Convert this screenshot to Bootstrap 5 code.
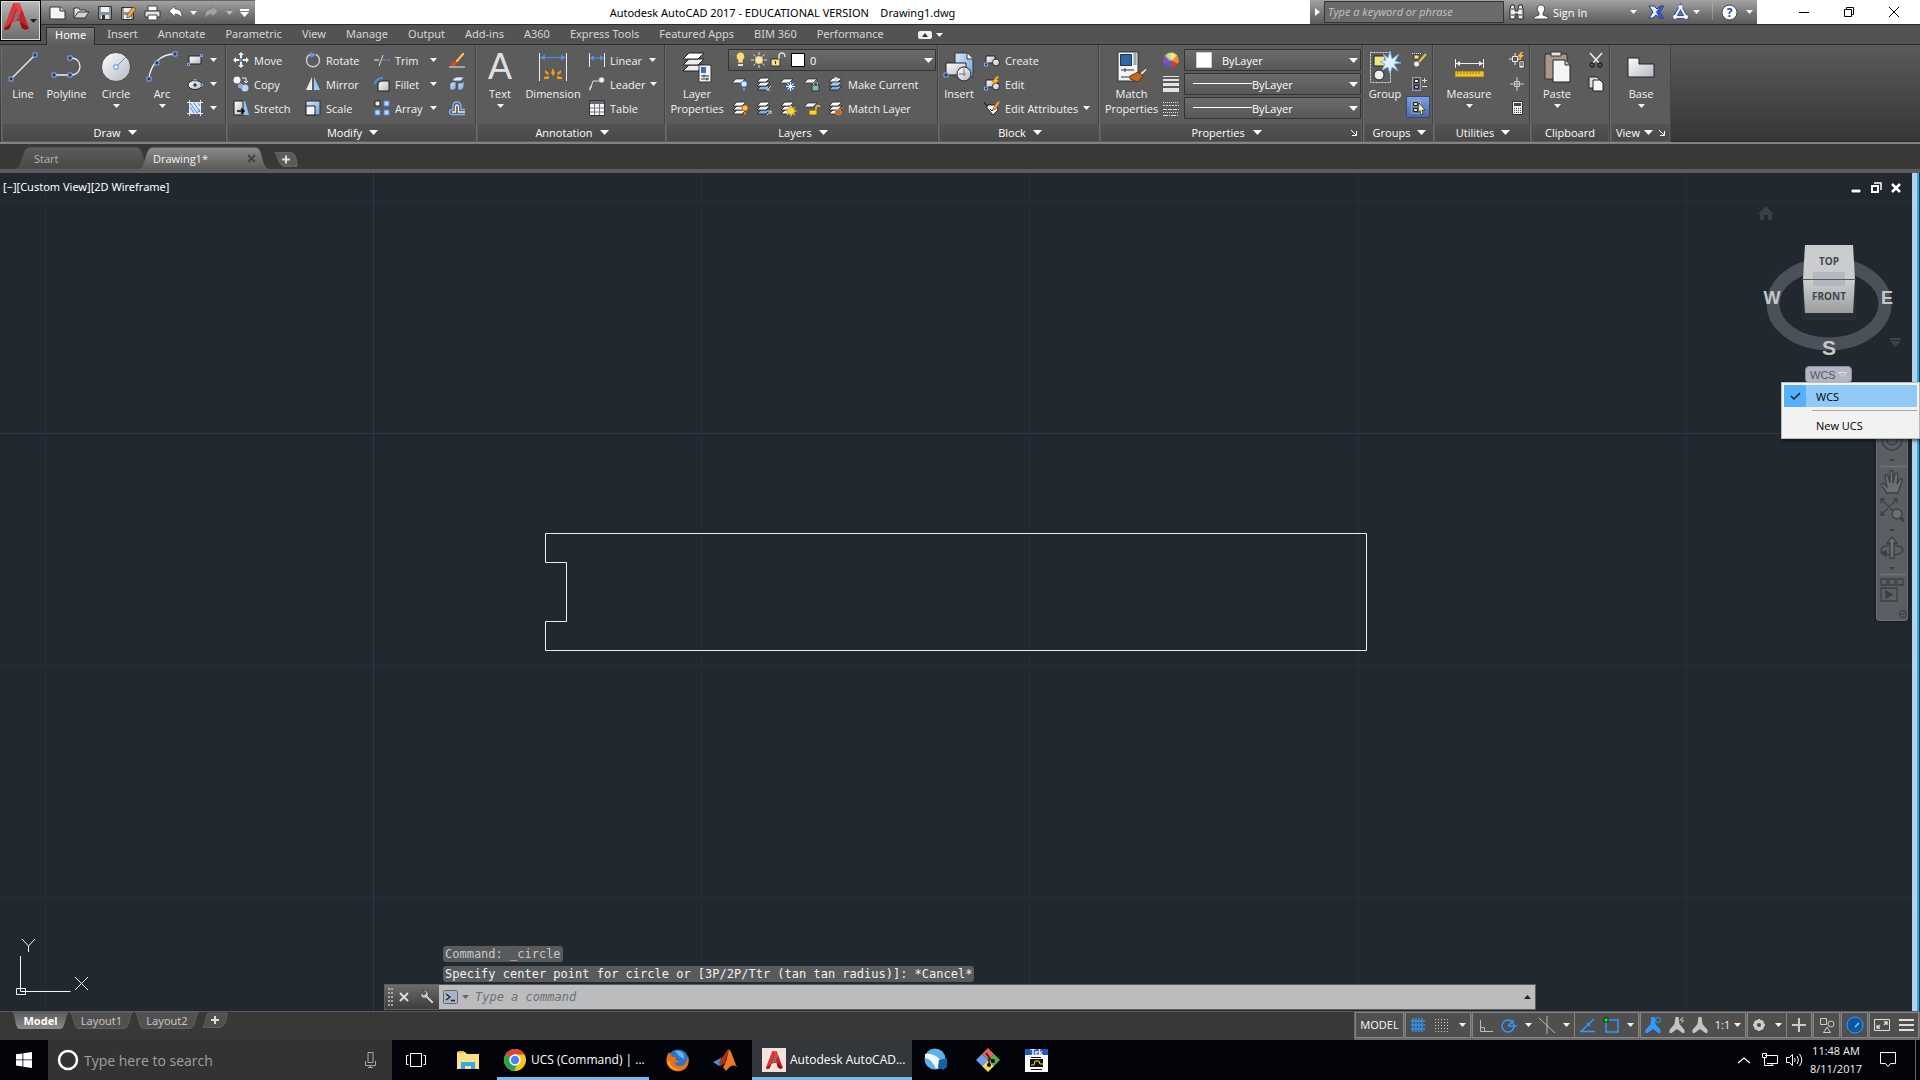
<!DOCTYPE html>
<html lang="en">
<head>
<meta charset="utf-8">
<meta name="viewport" content="width=device-width, initial-scale=1">
<title>Autodesk AutoCAD 2017 - Drawing1.dwg</title>
<link href="https://cdn.jsdelivr.net/npm/bootstrap@5.3.0/dist/css/bootstrap.min.css" rel="stylesheet">
<style>
:root{--ui:"Open Sans","Noto Sans",sans-serif;--ui-wide:"Noto Sans","Open Sans",sans-serif;--mono:"DejaVu Sans Mono","Liberation Mono",monospace}
body{font-family:var(--ui);font-size:11px;line-height:15px;background:#383838;color:#f2f2f2;height:100vh;overflow:hidden}
svg{display:block;flex:none;overflow:visible}
button{background:none;border:0;padding:0;margin:0;color:inherit;font:inherit;text-align:left;white-space:nowrap}
a{color:inherit;text-decoration:none}
.caret-s{width:7px;height:4px;fill:#f4f4f4}
.caret-l{width:9px;height:5px;fill:#fff}
.caret-dark{fill:#222}
.caret-dim{fill:#bbb}
.caret-grey{fill:#666}

/* title bar */
.titlebar{height:25px;background:#fff;border-bottom:1px solid #2b2b2b;color:#000;font-family:var(--ui-wide)}
.appbtn{left:0;top:0;width:41px;height:41px;background:linear-gradient(#b9b9b9,#8d8d8d 50%,#6c6c6c);border:1px solid #000;outline:1px solid #ddd;outline-offset:-2px;z-index:5;padding:2px}
.qat{width:255px;padding-left:49px;gap:7px;background:linear-gradient(#a3a3a3,#777 55%,#5b5b5b);border-top:1px solid #666}
.info{width:447px;background:linear-gradient(#a3a3a3,#777 55%,#5b5b5b);color:#fff;font-family:var(--ui)}
.info-arrow{width:14px}
.info-find{width:180px;height:22px;background:#6b6b6b;border:1px solid #333;color:#fff;font-style:italic;padding:0 0 1px 3px}
.info-find::placeholder{color:#c4c4c4;opacity:1}
.winbtns{padding:0 4px 0 24px}
.wbtn{width:45px;height:24px;color:#000}

/* ribbon tabs */
.tabs{height:20px;background:#535353;padding-left:46px;border-bottom:1px solid #2c2c2c;font-family:var(--ui-wide)}
.tabs a{padding:1px 10px 0;color:#d6d6d6;height:19px}
.tabs a.on{background:linear-gradient(#777,#5c5c5c);color:#fff;border:1px solid #2c2c2c;border-bottom:0;margin:2px 2px 0 0;height:18px;padding:0 8px;line-height:14px}

/* ribbon */
.ribbon{height:99px;background:linear-gradient(#5a5a5a,#363636);border-bottom:2px solid #838383;padding-left:1px;box-shadow:inset 0 -1px #2c2c2c}
.panel{height:97px;background:#5c5c5c;border-right:1px solid #444;box-shadow:inset 1px 0 #6a6a6a}
.pbody{height:79px;display:grid;align-content:start;padding-left:1px}
.ptitle{height:17px;background:linear-gradient(#535353,#494949);color:#fff;margin:0 1px 0 2px;gap:7px}
#draw{width:225px}#draw .pbody{grid-template-columns:42px 45px 54px 38px 42px}
#modify{width:250px}#modify .pbody{grid-template-columns:72px 69px 75px 30px}
#annotation{width:189px}#annotation .pbody{grid-template-columns:46px 60px 79px}
#layers{width:273px}#layers .pbody{grid-template-columns:62px 208px}
#block{width:161px}#block .pbody{grid-template-columns:38px 118px;padding-left:2px}
#properties{width:264px}#properties .pbody{grid-template-columns:63px 198px}
#groups{width:70px}#groups .pbody{grid-template-columns:42px 25px}
#utilities{width:97px}#utilities .pbody{grid-template-columns:70px 25px}
#clipboard{width:80px}#clipboard .pbody{grid-template-columns:52px 25px}
#viewpanel{width:61px}#viewpanel .pbody{grid-template-columns:60px}
#viewpanel .ptitle{gap:6px}
.big{padding-top:6px;height:79px;display:flex;flex-direction:column;align-items:center;text-align:center}
.big svg.ic{width:32px;height:32px;margin-bottom:3px}
.big .bigA{font-family:"Liberation Sans",sans-serif;font-size:36px;line-height:32px;height:32px;margin-bottom:3px;color:#e0e0e0}
.big .caret-s{margin-top:3px}
.stack{padding:3px 0 0 6px}
.stack.mini{padding-left:0}
.r{height:24px;width:100%;display:flex;align-items:center;gap:5px}
.r .ic,.ic16{width:16px;height:16px}
.r .caret-s{margin-left:auto;margin-right:6px}
.mini .r{justify-content:center}
.sq{width:24px;height:24px;display:flex;align-items:center;justify-content:center}
.selwrap{height:22px;background:linear-gradient(#6c6c6c,#585858);border:1px solid #333}
.selwrap select{appearance:none;background:none;border:0;color:#fff;width:100%;height:20px;font:inherit;padding:0 16px 0 37px}
.selwrap .caret-l{right:2px;top:8px;pointer-events:none}
.selwrap .deco{left:0;top:0;pointer-events:none}
.sel-layer select{padding-left:81px}
.sel-line select{padding-left:67px}
.active-tool{background:linear-gradient(#7f9fd6,#4d6b9e);border:1px solid #2f4a80;height:22px;width:24px}

/* file tabs */
.files{height:29px;background:#383838;border-bottom:4px solid #5c5c5c;padding:3px 0 0 22px}
.ftab{height:22px;position:relative}
.ftab .lbl{position:relative}
.ftab>svg{position:absolute;left:-6px;top:0}
.ftab .x{left:103px;top:8px}
.ftab .add{left:2px;top:5px}
.ft-start{width:123px;color:#b4b4b4}
.ft-doc{width:128px}
.ft-add{width:24px}

/* drawing area */
.canvas{background:#212830;min-height:0}
.drawing{inset:0;width:100%;height:100%}
.vlabel{left:3px;top:6px;color:#fff;font-family:var(--ui-wide)}
.edge{right:0;top:0;bottom:0;width:8px;background:linear-gradient(90deg,#b9cfe9 0 5px,#1fb4e8 5px 7px,#1c2e4c 7px)}
.mdi{right:18px;top:8px}
.cube{right:0;top:17px}
.wcs{right:68px;top:193px;width:47px;height:17px;background:#b4b6c6;border:1px solid #8b8d99;border-radius:4px;color:#55575f;font-family:"Liberation Sans",sans-serif;line-height:14px}
.ucsmenu{right:0;top:209px;width:139px;height:57px;background:#f2f2f2;border:1px solid #b8b8b8;color:#000;padding:2px;box-shadow:2px 2px 3px #0008;z-index:4}
.ucsmenu button{height:22px;width:100%;color:#000;gap:10px}
.ucsmenu .tick{width:22px;height:22px}
.ucsmenu .picked{background:#91c9f7}
.ucsmenu .picked .tick{background:#56b0fa}
.ucsmenu hr{margin:3px 0 3px 28px;border-color:#a8a8a8;opacity:1}
.navtools{right:12px;top:249px;width:32px;height:199px;background:#5b5f63;border:1px solid #6b6f73;border-radius:3px;box-shadow:0 0 3px #111}
.cmdwrap{left:384px;bottom:1px;width:60%}
.hist{font-family:var(--mono);font-size:12px;line-height:16px;height:16px;background:#585a5c;border-radius:3px;padding:0 2px;margin-left:59px;white-space:pre}
.hist.old{color:#c8c8c8}
.histlines{gap:4px;margin-bottom:2px}
.cmd{height:26px;border:1px solid #5e5e5e;background:#babcbe}
.cmdtools{width:54px;gap:7px;padding-left:3px;background:linear-gradient(#6b6b6b,#3d3d3d)}
.cmd input{background:none;border:0;color:#222;font:italic 12px/16px var(--mono);padding:0;margin-left:6px}
.cmd input::placeholder{color:#6e7072;opacity:1}
.cmd input:focus,.find:focus{outline:0}

/* layout tabs and status bar */
.lower{height:29px;background:#383838;border-top:1px solid #5a5a5a}
.ltabs{padding-left:12px}
.ltab{height:17px;position:relative;display:flex;align-items:center;justify-content:center;color:#c4c4c4;font-family:var(--ui-wide)}
.ltab svg{position:absolute;left:0;top:0}
.ltab span{position:relative}
.lt-model{width:57px}.lt-1{width:65px}.lt-2{width:66px}.lt-add{width:28px}
.status{height:28px;background:#6b6b6b;padding:0 1px}
.sgrp{height:26px;background:#4f4f4f;border:1px solid #858585;margin-right:1px}
.sgrp button{height:23px;width:24px;display:flex;align-items:center;justify-content:center}
.sgrp button.s-menu{width:16px}
.sgrp button.s-tool{width:22px}
.sgrp button.s-wide{width:25px}
.sgrp button.s-scale{width:34px}
.sgrp button.s-text{width:47px;font-family:var(--ui-wide)}
.sgrp svg.ic{width:18px;height:18px}

/* taskbar */
.task{height:40px;background:#020409}
.task .t48{width:48px;height:40px;display:flex;align-items:center;justify-content:center}
.search{width:344px;background:#333;padding-left:8px}
.find{background:none;border:0;color:#ddd;font-size:14px;line-height:20px;padding:2px 0 0}
.find::placeholder{color:#a0a0a0;opacity:1}
.app{height:40px;font-size:12px;color:#fff;border-bottom:3px solid #76b9ed;padding-top:2px}
.app-chrome{width:152px;margin-left:5px;padding-left:6px}
.app-cad{width:160px;padding-left:10px;margin-left:3px;background:#33373c}
.clock{font-size:11px;line-height:18px;text-align:center;width:66px}
.bell{margin:0 18px 0 11px}
.showdesk{width:5px;height:40px;border-left:1px solid #666}
</style>
</head>
<body class="d-flex flex-column">
<svg width="0" height="0" class="position-absolute" aria-hidden="true">
<defs>
<linearGradient id="gw" x1="0" y1="0" x2="1" y2="1"><stop offset="0" stop-color="#fff"/><stop offset="1" stop-color="#b4b8c2"/></linearGradient>
<linearGradient id="gb" x1="0" y1="0" x2="1" y2="1"><stop offset="0" stop-color="#d8eafc"/><stop offset="1" stop-color="#6fa2dc"/></linearGradient>
<linearGradient id="gtab" x1="0" y1="0" x2="0" y2="1"><stop offset="0" stop-color="#8a8a8a"/><stop offset="1" stop-color="#5c5c5c"/></linearGradient>
<linearGradient id="gtab2" x1="0" y1="0" x2="0" y2="1"><stop offset="0" stop-color="#5c5c5c"/><stop offset="1" stop-color="#484848"/></linearGradient>
<linearGradient id="gtab3" x1="0" y1="0" x2="0" y2="1"><stop offset="0" stop-color="#5c5c5c"/><stop offset="1" stop-color="#8a8a8a"/></linearGradient>
<linearGradient id="gcube" x1="0" y1="0" x2="0" y2="1"><stop offset="0" stop-color="#cfd0d1"/><stop offset="1" stop-color="#9c9d9e"/></linearGradient>
<symbol id="c" viewBox="0 0 8 4" preserveAspectRatio="none"><path d="M0 0h8L4 4z"/></symbol>
<symbol id="alogo" viewBox="0 0 24 26"><path d="M9 0h6l9 24-3 2-4-2-2-7-7 1-3 7-4 1-1-2z" fill="#c3242b"/><path d="M9 0h6l2 7-5 10-4 1 5-11z" fill="#e2494a"/><path d="M0 24l7-5-2 6-4 1z" fill="#8e1218"/><path d="M12 7l3 8-6 1z" fill="#777"/><path d="M9 0 0 24l5-3 7-16z" fill="#d83a3d"/><path d="M15 17l9 7-3 2-4-2z" fill="#8e1218"/></symbol>
<symbol id="sheets" viewBox="0 0 16 16"><path d="M5 10h9l-4 4H1z" fill="#f2f2f2" stroke="#222" stroke-width=".8"/><path d="M5 6h9l-4 4H1z" fill="#f2f2f2" stroke="#222" stroke-width=".8"/><path d="M5 2h9l-4 4H1z" fill="#fff" stroke="#222" stroke-width=".8"/></symbol>
<symbol id="sheetsb" viewBox="0 0 16 16"><path d="M5 10h9l-4 4H1z" fill="#7db0ea" stroke="#222" stroke-width=".8"/><path d="M5 6h9l-4 4H1z" fill="#f2f2f2" stroke="#222" stroke-width=".8"/><path d="M5 2h9l-4 4H1z" fill="#fff" stroke="#222" stroke-width=".8"/></symbol>
<symbol id="sheet1" viewBox="0 0 16 16"><path d="M4 3h9L9 7H0z" fill="#f6f6f6" stroke="#222" stroke-width=".7"/></symbol>
<symbol id="blk" viewBox="0 0 16 16"><path d="M2 4h9v7H2z" fill="url(#gw)" stroke="#222"/><circle cx="12" cy="10.500" r="3.500" fill="url(#gw)" stroke="#222"/><path d="M.5 11h3v3h-3z" fill="#335" stroke="#7db0ff"/></symbol>
<symbol id="page" viewBox="0 0 16 16"><path d="M1 1h8l3 3v8H1z" fill="#ddd" stroke="#222"/><path d="M5 4h7l3 3v8H5z" fill="#f6f6f6" stroke="#222"/></symbol>
<symbol id="man" viewBox="0 0 18 18"><path d="M7.500 1h3l1 7 5 6v3h-2l-5.500-4-5.500 4h-2v-3l5-6z"/></symbol>
</defs></svg>

<header class="titlebar d-flex flex-shrink-0 position-relative">
  <button class="appbtn position-absolute d-flex" aria-label="Application menu"><svg width="27" height="27"><use href="#alogo" width="27" height="27"/></svg><svg class="caret-s caret-dark mt-3"><use href="#c"/></svg></button>
  <div class="qat d-flex align-items-center">
    <button aria-label="New"><svg width="17" height="16"><path d="M1 2h10l5 4v8H1z" fill="#f4f5f7" stroke="#333"/><path d="M11 2v4h5" fill="#ccc" stroke="#333"/></svg></button>
    <button aria-label="Open"><svg width="17" height="16"><path d="M1 13V3h5l1 2h6v3" fill="#e4e8ee" stroke="#333"/><path d="M1 13l4-6h11l-4 6z" fill="#c9d3df" stroke="#333"/></svg></button>
    <button aria-label="Save"><svg width="16" height="16"><path d="M1.500 1.500h13v13h-13z" fill="#8b95a5" stroke="#333"/><path d="M4 2h8v5H4z" fill="#f2f2f2"/><path d="M4 10h8v4H4z" fill="#dfe3ea"/><path d="M5 10h3v4H5z" fill="#333"/></svg></button>
    <button aria-label="Save As"><svg width="17" height="16"><path d="M1.500 2.500h12v12h-12z" fill="#8b95a5" stroke="#333"/><path d="M4 3h7v4H4zM4 10h7v4H4z" fill="#eee"/><path d="M7 10l6-8 3 2-6 8-3 1z" fill="#f0a848" stroke="#6b3d10" stroke-width=".7"/></svg></button>
    <button aria-label="Plot"><svg width="17" height="16"><path d="M4 1h9v5H4z" fill="#fff" stroke="#444"/><path d="M1 6h15v6H1z" fill="#e4e4e4" stroke="#333"/><path d="M4 10h9v5H4z" fill="#fff" stroke="#444"/></svg></button>
    <button aria-label="Undo"><svg width="15" height="16"><path d="M1 6l6-5v3c5 0 7 3 7 9-2-3-4-4-7-4v3z" fill="#fff" stroke="#444" stroke-width=".7"/></svg></button>
    <button aria-label="Undo list"><svg class="caret-s"><use href="#c"/></svg></button>
    <button aria-label="Redo"><svg width="15" height="16"><path d="M14 6L8 1v3C3 4 1 7 1 13c2-3 4-4 7-4v3z" fill="#a4a4a4" stroke="#777" stroke-width=".7"/></svg></button>
    <button aria-label="Redo list"><svg class="caret-s caret-dim"><use href="#c"/></svg></button>
    <button aria-label="Customize Quick Access Toolbar"><svg width="9" height="8" fill="#fff"><path d="M0 0h9v2H0zM0 3h9L4.500 8z"/></svg></button>
  </div>
  <div class="flex-fill d-flex justify-content-center align-items-center"><span>Autodesk AutoCAD 2017 - EDUCATIONAL VERSION &nbsp;&nbsp; Drawing1.dwg</span></div>
  <div class="info d-flex align-items-center">
    <button class="info-arrow d-flex justify-content-center" aria-label="Collapse search"><svg width="5" height="8" fill="#fff"><path d="M0 0l5 4-5 4z"/></svg></button>
    <input class="info-find" type="text" placeholder="Type a keyword or phrase" aria-label="Type a keyword or phrase">
    <button class="ms-1" aria-label="Search"><svg width="17" height="16"><path d="M2 5l1-4h3l1 4v2h3V5l1-4h3l1 4v10H10v-5H7v5H2z" fill="#eee" stroke="#222"/><path d="M3 5h3M11 5h3M3 11h3M11 11h3" stroke="#333"/></svg></button>
    <button class="ms-2 d-flex align-items-center gap-1"><svg width="16" height="16"><path d="M8 1c5 0 4 6 2 8v2l5 2v2H1v-2l5-2V9C4 7 3 1 8 1z" fill="#fff" stroke="#333" stroke-width=".8"/></svg>Sign In</button>
    <button class="ms-auto me-2" aria-label="Sign in options"><svg class="caret-s"><use href="#c"/></svg></button>
    <button class="mx-1" aria-label="Exchange"><svg width="15" height="14"><path d="M0 1h5l3 3 3-3h4l-4 6 4 6h-5l-3-3-3 3H0l4-6z" fill="#e8ecf8" stroke="#223a80"/><path d="M11 1h4l-4 6 4 6h-5L7 7z" fill="#3756b8"/></svg></button>
    <button class="mx-1" aria-label="A360"><svg width="17" height="16"><path d="M8.500 3L14 13H3z" fill="none" stroke="#3c54a0" stroke-width="4"/><path d="M8.500 3L14 13H3z" fill="none" stroke="#e8edfa" stroke-width="2"/><circle cx="8.500" cy="3" r="2" fill="#fff"/><circle cx="14" cy="13" r="2" fill="#fff"/><circle cx="3" cy="13" r="2" fill="#fff"/></svg></button>
    <button class="me-2" aria-label="A360 menu"><svg class="caret-s"><use href="#c"/></svg></button>
    <div class="vr my-1 ms-1"></div>
    <button class="mx-2" aria-label="Help"><svg width="17" height="17"><circle cx="8.500" cy="8.500" r="7.500" fill="#fff" stroke="#345"/><text x="8.500" y="13" text-anchor="middle" font-size="12" font-weight="700" fill="#1f4fb0">?</text></svg></button>
    <button class="me-1" aria-label="Help menu"><svg class="caret-s"><use href="#c"/></svg></button>
  </div>
  <div class="winbtns d-flex">
    <button class="wbtn d-flex align-items-center justify-content-center" aria-label="Minimize"><svg width="10" height="10" stroke="#000"><path d="M0 5.500h10"/></svg></button>
    <button class="wbtn d-flex align-items-center justify-content-center" aria-label="Restore"><svg width="10" height="10" stroke="#000" fill="none"><path d="M.5 2.500h7v7h-7zM2.500 2.500v-2h7v7h-2"/></svg></button>
    <button class="wbtn d-flex align-items-center justify-content-center" aria-label="Close"><svg width="10" height="10" stroke="#000"><path d="M0 0l10 10M10 0L0 10"/></svg></button>
  </div>
</header>

<nav class="tabs d-flex flex-shrink-0 align-items-center">
  <a href="#" class="on">Home</a><a href="#">Insert</a><a href="#">Annotate</a><a href="#">Parametric</a><a href="#">View</a><a href="#">Manage</a><a href="#">Output</a><a href="#">Add-ins</a><a href="#">A360</a><a href="#">Express Tools</a><a href="#">Featured Apps</a><a href="#">BIM 360</a><a href="#">Performance</a>
  <button class="ms-4 d-flex align-items-center gap-1" aria-label="Ribbon display"><svg width="14" height="8"><rect width="14" height="8" rx="2" fill="#eee"/><path d="M4 6h6L7 2z" fill="#333"/></svg><svg class="caret-s"><use href="#c"/></svg></button>
</nav>

<section class="ribbon d-flex flex-shrink-0">
  <div class="panel" id="draw"><div class="pbody">
    <button class="big"><svg class="ic" viewBox="0 0 32 32"><path d="M4 28L28 4" stroke="#eee" stroke-width="1.300"/><path d="M2 26h4v4H2zM26 2h4v4h-4z" fill="#335" stroke="#7db0ff"/></svg>Line</button>
    <button class="big"><svg class="ic" viewBox="0 0 32 32"><path d="M3 24h17c12 0 12-17 0-17" fill="none" stroke="#eee" stroke-width="1.300"/><path d="M1 22h4v4H1zM17 22h4v4h-4zM17 5h4v4h-4z" fill="#335" stroke="#7db0ff"/></svg>Polyline</button>
    <button class="big"><svg class="ic" viewBox="0 0 32 32"><circle cx="16" cy="16" r="14.500" fill="url(#gw)" stroke="#333" stroke-width=".8"/><path d="M16 16L26 6" stroke="#4d90f0"/><path d="M14 14h4v4h-4z" fill="#fff" stroke="#4d90f0"/></svg>Circle<svg class="caret-s"><use href="#c"/></svg></button>
    <button class="big"><svg class="ic" viewBox="0 0 32 32"><path d="M3 28C4 14 14 3 29 3" fill="none" stroke="#eee" stroke-width="1.300"/><path d="M1 26h4v4H1zM9 10h4v4H9zM27 1h4v4h-4z" fill="#335" stroke="#7db0ff"/></svg>Arc<svg class="caret-s"><use href="#c"/></svg></button>
    <div class="stack">
      <button class="r" aria-label="Rectangle"><svg class="ic" viewBox="0 0 16 16"><path d="M2 4h12v8H2z" fill="url(#gw)" stroke="#222"/><path d="M.5 11.500h2v2h-2zM13.500 2.500h2v2h-2z" fill="#335" stroke="#7db0ff"/></svg><svg class="caret-s"><use href="#c"/></svg></button>
      <button class="r" aria-label="Ellipse"><svg class="ic" viewBox="0 0 16 16"><ellipse cx="8" cy="9" rx="7" ry="4.500" fill="url(#gw)" stroke="#222"/><path d="M8 7v4M6 9h4" stroke="#111"/><path d="M7 3.500h2v2H7zM13.500 8h2v2h-2z" fill="#335" stroke="#7db0ff"/></svg><svg class="caret-s"><use href="#c"/></svg></button>
      <button class="r" aria-label="Hatch"><svg class="ic" viewBox="0 0 16 16"><path d="M3 3h10v10H3z" fill="#dbe8fb"/><path d="M3 7l4 6M3 3l7 10M7 3l6 9M11 3l2 3M9 15l6-8" stroke="#4d84e0"/><path d="M0 2.500h16M0 13.500h16M2.500 0v16M13.500 0v16" stroke="#e6e6e6"/></svg><svg class="caret-s"><use href="#c"/></svg></button>
    </div>
  </div><button class="ptitle d-flex align-items-center justify-content-center w-100">Draw<svg class="caret-l"><use href="#c"/></svg></button></div>

  <div class="panel" id="modify"><div class="pbody">
    <div class="stack">
      <button class="r"><svg class="ic" viewBox="0 0 16 16"><path d="M8 0l3 3H9v3H7V3H5zM8 16l3-3H9v-3H7v3H5zM0 8l3-3v2h3v2H3v2zM16 8l-3-3v2h-3v2h3v2z" fill="#eee"/><path d="M7 7h2v2H7z" fill="#335" stroke="#7db0ff"/></svg>Move</button>
      <button class="r"><svg class="ic" viewBox="0 0 16 16"><circle cx="4" cy="4" r="3.500" fill="#f4f4f4"/><circle cx="12" cy="12" r="3.500" fill="#bcd4f4"/><circle cx="7.500" cy="10" r="2.500" fill="#8ab4ee"/><path d="M9 2h4v4M11 5l2 2 2-2" fill="none" stroke="#eee"/></svg>Copy</button>
      <button class="r"><svg class="ic" viewBox="0 0 16 16"><path d="M9 1h3l4 14H9z" fill="#8fc1f2"/><path d="M1 1h9v14H1z" fill="url(#gw)" stroke="#222"/><path d="M4 11h7M8 8.500l3 2.500-3 2.500" fill="none" stroke="#000" stroke-width="1.500"/></svg>Stretch</button>
    </div>
    <div class="stack">
      <button class="r"><svg class="ic" viewBox="0 0 16 16"><path d="M11 2.500A6.500 6.500 0 1 1 5 2.500" fill="none" stroke="#ccc" stroke-width="1.500"/><path d="M5 0l6 2.500L6 6z" fill="#5d9cf5"/></svg>Rotate</button>
      <button class="r"><svg class="ic" viewBox="0 0 16 16"><path d="M7 1v13H1z" fill="#eee"/><path d="M9 1v13h6z" fill="#9ec6f4"/></svg>Mirror</button>
      <button class="r"><svg class="ic" viewBox="0 0 16 16"><path d="M1 1h14v14H1z" fill="url(#gb)" stroke="#233"/><path d="M1 6h9v9H1z" fill="#f4f4f4" stroke="#222"/></svg>Scale</button>
    </div>
    <div class="stack">
      <button class="r"><svg class="ic" viewBox="0 0 16 16"><path d="M0 8h5" stroke="#eee"/><path d="M9 3L5 14" stroke="#ddd"/><path d="M9 8h3m1 0h3" stroke="#5d9cf5"/></svg>Trim<svg class="caret-s"><use href="#c"/></svg></button>
      <button class="r"><svg class="ic" viewBox="0 0 16 16"><path d="M4 15V9q0-4 5-4h6v10z" fill="url(#gw)" stroke="#222"/><path d="M1 8Q2 2 9 2" fill="none" stroke="#4d90f0" stroke-width="2"/></svg>Fillet<svg class="caret-s"><use href="#c"/></svg></button>
      <button class="r"><svg class="ic" viewBox="0 0 16 16"><path d="M1 1h5v5H1z" fill="#eee" stroke="#222"/><path d="M10 1h5v5h-5zM1 10h5v5H1zM10 10h5v5h-5z" fill="#bcd6f8" stroke="#4d84e0"/></svg>Array<svg class="caret-s"><use href="#c"/></svg></button>
    </div>
    <div class="stack">
      <button class="r" aria-label="Erase"><svg class="ic" viewBox="0 0 16 16"><path d="M6 9l8-9 2 2-8 9z" fill="#f0c068" stroke="#6b3d10" stroke-width=".6"/><path d="M2 11l4-2 2 2-2 3-3 1z" fill="#d3521a"/><path d="M0 15h16" stroke="#eee"/></svg></button>
      <button class="r" aria-label="Explode"><svg class="ic" viewBox="0 0 16 16"><path d="M1 8l2-2h4v6l-2 2H1z" fill="url(#gb)" stroke="#456" stroke-width=".7"/><path d="M4 3l3-2h8l-3 4H4z" fill="#dcebfb" stroke="#456" stroke-width=".7"/><path d="M9 7h4l2-2v6l-2 3H9z" fill="url(#gb)" stroke="#456" stroke-width=".7"/></svg></button>
      <button class="r" aria-label="Offset"><svg class="ic" viewBox="0 0 16 16"><path d="M16 9.500h-4V6q0-4-4-4T4 6v3.500H3Q.5 10 .5 12t2.500 2.500h13" fill="none" stroke="#7db0ff" stroke-width="1.300"/><path d="M16 12H9.500V6.500Q9.500 5 8 5T6.500 6.500V12H3" fill="none" stroke="#eee" stroke-width="1.300"/></svg></button>
    </div>
  </div><button class="ptitle d-flex align-items-center justify-content-center w-100">Modify<svg class="caret-l"><use href="#c"/></svg></button></div>

  <div class="panel" id="annotation"><div class="pbody">
    <button class="big"><span class="bigA" aria-hidden="true">A</span>Text<svg class="caret-s"><use href="#c"/></svg></button>
    <button class="big"><svg class="ic" viewBox="0 0 32 32"><path d="M2.500 2v28M29.500 2v28" stroke="#eee"/><path d="M3 6.500h26" stroke="#4d90f0"/><path d="M3 6.500l5-3v6zM29 6.500l-5-3v6z" fill="#4d90f0"/><path d="M16 17l2 5-2 3-2-3zM8 19l4 3-1 2-3-2zM24 19l-4 3 1 2 3-2zM7 26l5-1v3H7zM25 26l-5-1v3h5z" fill="#f59a1e"/></svg>Dimension</button>
    <div class="stack">
      <button class="r"><svg class="ic" viewBox="0 0 16 16"><path d="M.5 1v14M15.500 1v14" stroke="#eee"/><path d="M1 6h14" stroke="#4d90f0"/><path d="M1 6l4-3v6zM15 6l-4-3v6z" fill="#4d90f0"/></svg>Linear<svg class="caret-s"><use href="#c"/></svg></button>
      <button class="r"><svg class="ic" viewBox="0 0 16 16"><path d="M1 14L4 5h6" fill="none" stroke="#ddd"/><path d="M0 15l1-5 2 1z" fill="#ddd"/><circle cx="12.500" cy="4" r="3" fill="#eee" stroke="#555" stroke-width=".6"/></svg>Leader<svg class="caret-s"><use href="#c"/></svg></button>
      <button class="r"><svg class="ic" viewBox="0 0 16 16"><path d="M.5.5h15v15H.5z" fill="#f4f4f4" stroke="#333"/><path d="M1 1h14v3H1z" fill="#667"/><path d="M1 8h14M1 12h14M5.500 4v11M10.500 4v11" stroke="#777"/></svg>Table</button>
    </div>
  </div><button class="ptitle d-flex align-items-center justify-content-center w-100">Annotation<svg class="caret-l"><use href="#c"/></svg></button></div>

  <div class="panel" id="layers"><div class="pbody">
    <button class="big"><svg class="ic" viewBox="0 0 32 32"><path d="M8 14h15l-6 6H2z" fill="#eee" stroke="#222"/><path d="M8 8h15l-6 6H2z" fill="#eee" stroke="#222"/><path d="M8 2h15l-6 6H2z" fill="#fff" stroke="#222"/><path d="M18 14h12v17H18z" fill="#f2f4f8" stroke="#333"/><path d="M20 16h5v6h-5z" fill="#3b6fb5"/><path d="M20 25h8M20 28h8M23 23.500v3M26 26.500v3" stroke="#333"/></svg>Layer<br>Properties</button>
    <div class="stack mini">
      <div class="r"><div class="selwrap sel-layer position-relative w-100">
        <svg class="deco position-absolute" width="78" height="20"><path d="M11 2a4.500 4.500 0 0 1 3 8v3h-5v-3a4.500 4.500 0 0 1 2-8z" fill="#fbdc86" stroke="#7a5a20" stroke-width=".7"/><path d="M9 14h5v2H9z" fill="#ddd"/><circle cx="30" cy="10" r="4" fill="#f9e7ab" stroke="#9c8a50" stroke-width=".5"/><path d="M30 2v3M30 15v3M22 10h3M35 10h3M24.500 4.500l2 2M33.500 13.500l2 2M35.500 4.500l-2 2M26.500 13.500l-2 2" stroke="#e8e0c0"/><path d="M42 9h9v7h-9z" fill="#f5dd90" stroke="#333"/><path d="M50 9V6q0-3 3-3t3 4" fill="none" stroke="#ddd" stroke-width="1.500"/><path d="M46 11h1v3h-1z" fill="#333"/><path d="M62.500 3.500h13v13h-13z" fill="#fff" stroke="#000"/></svg>
        <select aria-label="Layer"><option>0</option></select><svg class="caret-l position-absolute"><use href="#c"/></svg></div></div>
      <div class="d-flex">
        <button class="sq" aria-label="Layer off"><svg class="ic16"><use href="#sheet1"/><circle cx="12" cy="8" r="3" fill="#d8ecff" stroke="#4d84e0"/><path d="M11 12h2v3h-2z" fill="#4d90f0"/></svg></button>
        <button class="sq" aria-label="Isolate"><svg class="ic16"><use href="#sheetsb"/><path d="M15 10l-4 4m0-3v3h3" stroke="#ddd" fill="none"/></svg></button>
        <button class="sq" aria-label="Freeze"><svg class="ic16"><use href="#sheet1"/><circle cx="10.500" cy="10.500" r="4.500" fill="#3d6ec0"/><path d="M10.500 6v9M6 10.500h9M7.500 7.500l6 6M13.500 7.500l-6 6" stroke="#fff"/></svg></button>
        <button class="sq" aria-label="Lock"><svg class="ic16"><use href="#sheet1"/><path d="M8 9h7v6H8z" fill="#8fb5aa" stroke="#234"/><path d="M9.500 9V7q2-3 4 0v2" fill="none" stroke="#9cc4b8"/></svg></button>
        <button class="d-flex align-items-center ps-1"><svg class="ic16 me-1"><use href="#sheetsb"/><path d="M1 10l4-4h9l-4 4z" fill="#9cc8f2" stroke="#222" stroke-width=".6"/><circle cx="8" cy="3" r="2" fill="#ddd"/></svg><span>Make Current</span></button>
      </div>
      <div class="d-flex">
        <button class="sq" aria-label="Layers on"><svg class="ic16"><use href="#sheets"/><circle cx="13" cy="8" r="3" fill="#ffc53a" stroke="#b5651a"/><path d="M12 12h2v3h-2z" fill="#e0791c"/></svg></button>
        <button class="sq" aria-label="Unisolate"><svg class="ic16"><use href="#sheetsb"/><path d="M11 15l4-4m-3 0h3v3" stroke="#ddd" fill="none"/></svg></button>
        <button class="sq" aria-label="Thaw"><svg class="ic16"><use href="#sheets"/><circle cx="11" cy="11" r="3.500" fill="#ffd93a" stroke="#e0a41c"/><path d="M11 5.500v2M11 14.500v2M5.500 11h2M14.500 11h2M7 7l1.500 1.500M15 7l-1.500 1.500M7 15l1.500-1.500M15 15l-1.500-1.500" stroke="#ffe36a"/></svg></button>
        <button class="sq" aria-label="Unlock"><svg class="ic16"><use href="#sheet1"/><path d="M5 10h8v5H5z" fill="#ffcf3a" stroke="#7a5a10"/><path d="M12 10V7q2-3 4 0" fill="none" stroke="#ffcf3a" stroke-width="1.300"/></svg></button>
        <button class="d-flex align-items-center ps-1"><svg class="ic16 me-1"><use href="#sheets"/><path d="M7 12l4-3 3 3-2 3-4-1zM12 10l3-3" fill="#c8641c" stroke="#d98838"/></svg><span>Match Layer</span></button>
      </div>
    </div>
  </div><button class="ptitle d-flex align-items-center justify-content-center w-100">Layers<svg class="caret-l"><use href="#c"/></svg></button></div>

  <div class="panel" id="block"><div class="pbody">
    <button class="big"><svg class="ic" viewBox="0 0 32 32"><path d="M12 2h12l6 6v18H12z" fill="url(#gb)" stroke="#333"/><path d="M24 2v6h6" fill="#fff" stroke="#333"/><path d="M3 12h20v12H3z" fill="url(#gw)" stroke="#222"/><circle cx="21" cy="23" r="7" fill="url(#gw)" stroke="#222"/><path d="M16 23h7M21 18v7" stroke="#777"/><path d="M1 22h4v4H1z" fill="#335" stroke="#7db0ff"/></svg>Insert</button>
    <div class="stack">
      <button class="r"><svg class="ic"><use href="#blk"/></svg>Create</button>
      <button class="r"><svg class="ic"><use href="#blk"/><path d="M13 0L8 6h3L9 10l6-6h-3l3-3z" fill="#ffc02e" stroke="#c06a10" stroke-width=".5"/></svg>Edit</button>
      <button class="r"><svg class="ic" viewBox="0 0 16 16"><path d="M3 5h9l2 5-5 5-6-7z" fill="#f2f2f2" stroke="#222"/><path d="M0 2q1 3 4 4" stroke="#111" fill="none"/><path d="M6 9l2 2 6-8" stroke="#111" fill="none"/><path d="M9 8l5-7 2 1-5 8z" fill="#f0a848" stroke="#a04a10" stroke-width=".5"/></svg>Edit Attributes<svg class="caret-s"><use href="#c"/></svg></button>
    </div>
  </div><button class="ptitle d-flex align-items-center justify-content-center w-100">Block<svg class="caret-l"><use href="#c"/></svg></button></div>

  <div class="panel" id="properties"><div class="pbody">
    <button class="big"><svg class="ic" viewBox="0 0 32 32"><path d="M2 1h20v29H2z" fill="#f2f4f8" stroke="#333"/><path d="M4.500 3.500h11v11h-11z" fill="#2f66a8" stroke="#234"/><path d="M19 2v12" stroke="#9aa" stroke-width="3"/><path d="M5 19h13M5 26h10M9 17v4" stroke="#333"/><path d="M14 25l8-4 5 4-5 6-8-3z" fill="#c4671f" stroke="#6b3510"/><path d="M24 22l6-5 1 2-5 5z" fill="#ddd" stroke="#333" stroke-width=".6"/></svg>Match<br>Properties</button>
    <div class="stack mini">
      <div class="r"><svg class="ic" viewBox="0 0 16 16"><path d="M8 8V.5A7.500 7.500 0 0 1 14.500 4z" fill="#f5d94a"/><path d="M8 8l6.500-4a7.500 7.500 0 0 1 0 8z" fill="#f08a2c"/><path d="M8 8l6.500 4A7.500 7.500 0 0 1 8 15.500z" fill="#d43c3c"/><path d="M8 8v7.500A7.500 7.500 0 0 1 1.500 12z" fill="#3f63d0"/><path d="M8 8l-6.500 4a7.500 7.500 0 0 1 0-8z" fill="#8a4fc0"/><path d="M8 8L1.500 4A7.500 7.500 0 0 1 8 .5z" fill="#9fd05a"/><circle cx="8" cy="5" r="4" fill="#fff" opacity=".35"/></svg>
        <div class="selwrap flex-fill position-relative"><svg class="deco position-absolute" width="32" height="20"><path d="M11.500 2.500h15v15h-15z" fill="#fff" stroke="#ccc"/></svg><select aria-label="Object color"><option>ByLayer</option></select><svg class="caret-l position-absolute"><use href="#c"/></svg></div></div>
      <div class="r"><svg class="ic" viewBox="0 0 16 16" fill="#e4e4e4"><path d="M0 0h16v1H0zM0 3h16v2H0zM0 7h16v3H0zM0 12h16v4H0z"/></svg>
        <div class="selwrap sel-line flex-fill position-relative"><svg class="deco position-absolute" width="70" height="20"><path d="M8 9.500h59" stroke="#fff"/></svg><select aria-label="Lineweight"><option>ByLayer</option></select><svg class="caret-l position-absolute"><use href="#c"/></svg></div></div>
      <div class="r"><svg class="ic" viewBox="0 0 16 16" stroke="#ddd"><path d="M0 2.500h16" stroke-dasharray="1 1"/><path d="M0 5.500h16" stroke-dasharray="2 1"/><path d="M0 9.500h16" stroke-dasharray="4 1"/><path d="M0 12.500h16" stroke-dasharray="1 1"/><path d="M0 15.500h16" stroke-dasharray="5 1 1 1"/></svg>
        <div class="selwrap sel-line flex-fill position-relative"><svg class="deco position-absolute" width="70" height="20"><path d="M8 9.500h59" stroke="#fff"/></svg><select aria-label="Linetype"><option>ByLayer</option></select><svg class="caret-l position-absolute"><use href="#c"/></svg></div></div>
    </div>
  </div><div class="ptitle d-flex align-items-center"><button class="d-flex align-items-center flex-fill justify-content-center gap-2 ps-2">Properties<svg class="caret-l"><use href="#c"/></svg></button><button class="me-1" aria-label="Properties dialog"><svg width="6" height="6" stroke="#fff" fill="none"><path d="M0 0l5 5M5.500 1v4.500H1"/></svg></button></div></div>

  <div class="panel" id="groups"><div class="pbody">
    <button class="big"><svg class="ic" viewBox="0 0 32 32"><path d="M1.500 1.500h20v30h-20z" fill="none" stroke="#ddd" stroke-dasharray="2 1"/><path d="M5 5h11v10H5z" fill="#f3e27f" stroke="#222"/><circle cx="10" cy="24" r="5" fill="#eee" stroke="#222"/><path d="M21 0l2 8 7-5-4 7 6 2-7 1 4 7-6-4-2 7-2-7-6 3 3-6-5-2 6-2-3-6 5 4z" fill="#dff1ff" stroke="#6db3f2" stroke-width=".8"/></svg>Group</button>
    <div class="stack mini">
      <button class="r" aria-label="Ungroup"><svg class="ic" viewBox="0 0 16 16"><path d="M1 1.500h10" stroke="#ddd" stroke-dasharray="1 1"/><path d="M3 3h5v4H3z" fill="#f3e27f" stroke="#222" stroke-width=".7"/><circle cx="5.500" cy="12" r="2.500" fill="#eee"/><path d="M8 10l7-8" stroke="#e9bf4a" stroke-width="2"/></svg></button>
      <button class="r" aria-label="Group edit"><svg class="ic" viewBox="0 0 16 16"><path d="M1.500 1.500h8v13h-8z" fill="none" stroke="#ddd" stroke-dasharray="1 1"/><path d="M3.500 3.500h4v3h-4z" fill="#eee" stroke="#222"/><path d="M3.500 9.500h4v3h-4z" fill="#7db0ff" stroke="#222"/><path d="M11 4.500h5M13.500 2v5M11 10.500h5" stroke="#ddd"/></svg></button>
      <button class="r active-tool" aria-label="Group selection"><svg class="ic" viewBox="0 0 16 16"><path d="M1.500 1.500h9v13h-9z" fill="none" stroke="#8cc4ff" stroke-dasharray="1 1"/><path d="M3.500 3.500h4v3h-4z" fill="#f3e27f" stroke="#222"/><path d="M3.500 9.500h4v3h-4z" fill="#ddd" stroke="#222"/><path d="M9 4l6 7h-3l1 4-2 .5-1-4-2 2z" fill="#fbf3b0" stroke="#222" stroke-width=".7"/></svg></button>
    </div>
  </div><button class="ptitle d-flex align-items-center justify-content-center w-100">Groups<svg class="caret-l"><use href="#c"/></svg></button></div>

  <div class="panel" id="utilities"><div class="pbody">
    <button class="big"><svg class="ic" viewBox="0 0 32 32"><path d="M2.500 8v9M30.500 8v9M3 12.500h27" stroke="#eee"/><path d="M3 12.500l4-2.500v5zM30 12.500l-4-2.500v5z" fill="#eee"/><path d="M2 20h29v6H2z" fill="#f0c030" stroke="#8a6410" stroke-width=".7"/><path d="M5 20v3M8 20v3M11 20v3M14 20v3M17 20v3M20 20v3M23 20v3M26 20v3" stroke="#7a5410" stroke-width=".7"/></svg>Measure<svg class="caret-s"><use href="#c"/></svg></button>
    <div class="stack mini">
      <button class="r" aria-label="Quick select"><svg class="ic" viewBox="0 0 16 16"><path d="M6 1v12M0 7h12" stroke="#eee"/><path d="M3.500 4.500h5v5h-5z" fill="#5c5c5c" stroke="#eee"/><path d="M12 0L8 5h3L9 9l6-6h-3l2-3z" fill="#ffb62e"/><path d="M10 9h5v7h-5z" fill="#eee" stroke="#222" stroke-width=".6"/><path d="M11 11h3M11 13h3" stroke="#222"/></svg></button>
      <button class="r" aria-label="ID Point"><svg class="ic" viewBox="0 0 16 16"><path d="M8 1v14M1 8h14" stroke="#ccc"/><path d="M5.500 5.500h5v5h-5z" fill="none" stroke="#ccc"/></svg></button>
      <button class="r" aria-label="Calculator"><svg class="ic" viewBox="0 0 16 16"><path d="M3.500 1.500h10v13h-10z" fill="#eee" stroke="#333"/><path d="M5 3h7v3H5z" fill="#444"/><path d="M5 8.500h7M5 10.500h7M5 12.500h7" stroke="#444" stroke-dasharray="1 1"/></svg></button>
    </div>
  </div><button class="ptitle d-flex align-items-center justify-content-center w-100">Utilities<svg class="caret-l"><use href="#c"/></svg></button></div>

  <div class="panel" id="clipboard"><div class="pbody">
    <button class="big"><svg class="ic" viewBox="0 0 32 32"><path d="M4 3h22v25H4z" fill="#a99686" stroke="#333"/><path d="M10 1h10v4H10z" fill="#e8e8e8" stroke="#333"/><path d="M12 9h12l5 5v17H12z" fill="#f4f5f7" stroke="#222"/><path d="M24 9v5h5" fill="#ccc" stroke="#222"/></svg>Paste<svg class="caret-s"><use href="#c"/></svg></button>
    <div class="stack mini">
      <button class="r" aria-label="Cut"><svg class="ic" viewBox="0 0 16 16"><path d="M2 1l9 10M14 1L5 11" stroke="#eee" stroke-width="1.500"/><circle cx="4" cy="13" r="2" fill="none" stroke="#222" stroke-width="1.300"/><circle cx="12" cy="13" r="2" fill="none" stroke="#222" stroke-width="1.300"/></svg></button>
      <button class="r" aria-label="Copy clip"><svg class="ic"><use href="#page"/></svg></button>
    </div>
  </div><div class="ptitle d-flex align-items-center justify-content-center">Clipboard</div></div>

  <div class="panel" id="viewpanel"><div class="pbody">
    <button class="big"><svg class="ic" viewBox="0 0 32 32"><path d="M3 7h11v6h15v13H3z" fill="url(#gw)" stroke="#222"/></svg>Base<svg class="caret-s"><use href="#c"/></svg></button>
  </div><div class="ptitle d-flex align-items-center justify-content-center"><button class="d-flex align-items-center gap-1">View<svg class="caret-l"><use href="#c"/></svg></button><button aria-label="View dialog"><svg width="6" height="6" stroke="#fff" fill="none"><path d="M0 0l5 5M5.500 1v4.500H1"/></svg></button></div></div>
</section>

<div class="files d-flex flex-shrink-0">
  <button class="ftab ft-start d-flex align-items-center"><svg width="140" height="22"><path d="M0 21.500C8 19 5 .5 14 .5h106c9 0 5 19 14 21z" fill="url(#gtab2)" stroke="#555" stroke-width=".6"/></svg><span class="lbl ms-2 ps-1">Start</span></button>
  <button class="ftab ft-doc d-flex align-items-center"><svg width="138" height="22"><path d="M0 22C8 19 5 .5 14 .5h102c9 0 5 18 14 21.500z" fill="url(#gtab)"/></svg><span class="lbl ms-2">Drawing1*</span><svg class="x" width="8" height="8" stroke="#444" stroke-width="2"><path d="M0 0l7 7M7 0L0 7"/></svg></button>
  <button class="ftab ft-add" aria-label="New tab"><svg class="add" width="22" height="15"><path d="M0 .5h15c5 0 7 6 7 14H9C4 14 3 5 0 .5z" fill="#5c5c5c" stroke="#777" stroke-width=".6"/><path d="M7 7.500h8M11 3.500v8" stroke="#ddd" stroke-width="2"/></svg></button>
</div>

<main class="canvas flex-fill position-relative overflow-hidden">
  <svg class="drawing position-absolute" aria-label="Drawing">
    <g stroke="#262e39"><path d="M45.500 0v840M701.500 0v840M1029.500 0v840M1358.500 0v840M1686.500 0v840M0 28.500h1912M0 492.500h1912M0 724.500h1912"/></g>
    <path d="M373.500 0v840M0 260.500h1912" stroke="#2f3847"/>
    <path d="M545.500 360.500h821v117h-821v-29h21v-59h-21z" fill="none" stroke="#eef0f2"/>
    <g stroke="#f4f4f4" fill="none"><path d="M20.500 783v35.500h50" /><path d="M16.500 815.500h9v6h-9z"/><path d="M22 766l6.500 7 6.500-7M28.500 773v6M75 804l13 13M88 804l-13 13"/></g>
  </svg>
  <span class="vlabel position-absolute">[−][Custom View][2D Wireframe]</span>
  <div class="edge position-absolute"></div>
  <div class="mdi position-absolute d-flex gap-2">
    <button aria-label="Minimize drawing"><svg width="12" height="14"><path d="M1 8h10v4H1z" fill="#fff" stroke="#111"/></svg></button>
    <button aria-label="Restore drawing"><svg width="12" height="14" fill="none" stroke="#fff" stroke-width="2"><path d="M4 2h7v7" stroke-width="1.500"/><path d="M2 5h6v6H2z"/></svg></button>
    <button aria-label="Close drawing"><svg width="12" height="14" stroke="#fff" stroke-width="2.500"><path d="M2 3l8 8M10 3l-8 8"/></svg></button>
  </div>
  <svg class="cube position-absolute" width="200" height="180" font-family="Open Sans" font-weight="700">
    <path d="M38 24l8-8 8 8h-2v6h-4v-5h-4v5h-4v-6z" fill="#3a4048"/>
    <ellipse cx="109" cy="114" rx="56" ry="40" fill="none" stroke="#4b5059" stroke-width="13"/>
    <path d="M82 90h54v40H82z" fill="#2c3139" opacity=".7"/>
    <path d="M85 55h48l2 34H83z" fill="#cbccce"/>
    <path d="M83 89h52l-2 34H85z" fill="url(#gcube)"/>
    <path d="M93 82h32v14H93z" fill="#b5b8c0"/><path d="M82 89.500h54" stroke="#555"/>
    <g fill="#41464e" text-anchor="middle" font-size="10"><text x="109" y="75">TOP</text><text x="109" y="110">FRONT</text></g>
    <g fill="#c6c7c9" text-anchor="middle" font-size="18" font-family="Liberation Sans"><text x="52" y="114">W</text><text x="167" y="114">E</text><text x="109" y="165" font-size="21">S</text></g>
    <path d="M170 148h11v2h-11zM170 151h11l-5.500 6z" fill="#3d434b"/>
  </svg>
  <button class="wcs position-absolute d-flex align-items-center justify-content-between px-1">WCS<svg width="9" height="6" fill="none" stroke="#ddd"><path d="M.5.5h8l-4 4z"/></svg></button>
  <div class="navtools position-absolute">
    <svg width="30" height="197" fill="none" stroke="#3c4045" stroke-width="1.300">
      <circle cx="15" cy="17" r="10"/><circle cx="15" cy="17" r="5"/><path d="M12 36h6l-3 3zM12 106h6l-3 3zM12 144h6l-3 3z" fill="#3c4045" stroke="none"/><path d="M3 43.500h26M3 151.500h26" stroke="#70747a"/>
      <path d="M10 70c-3-5-6-7-6-9 2-2 4 1 6 3l-2-11c0-2 2-2 3 0l2 7V49c0-2 3-2 3 0v11l2-9c1-2 3-1 3 1l-1 9 3-5c2-1 3 0 2 2l-4 12z" fill="#6b7074"/>
      <path d="M4 76l16 16M20 76L4 92M4 80v-4h4M16 76h4v4M4 88v4h4"/><circle cx="20" cy="91" r="5" fill="#6b7074"/><path d="M23 94l4 4" stroke-width="3"/>
      <ellipse cx="15" cy="127" rx="11" ry="5"/><path d="M13 135v-15h-3l5-6 5 6h-3v15z" fill="#6b7074"/><path d="M4 130l5-2v5z" fill="#3c4045"/>
      <path d="M4 156h6v6H4zM12 156h6v6h-6zM20 156h6v6h-6zM4 165h16v13H4z"/><path d="M9 168l6 3.500-6 3.500z" fill="#3c4045"/><circle cx="26" cy="191" r="3.500"/><path d="M24 191h4"/>
    </svg>
  </div>
  <div class="ucsmenu position-absolute">
    <button class="picked d-flex align-items-center"><span class="tick d-flex align-items-center justify-content-center"><svg width="11" height="8" fill="none" stroke="#123" stroke-width="1.500"><path d="M1 4l3 3 6-6"/></svg></span><span>WCS</span></button>
    <hr>
    <button class="d-flex align-items-center"><span class="tick"></span><span>New UCS</span></button>
  </div>
  <div class="cmdwrap position-absolute">
    <div class="histlines d-flex flex-column align-items-start"><div class="hist old">Command: _circle</div><div class="hist">Specify center point for circle or [3P/2P/Ttr (tan tan radius)]: *Cancel*</div></div>
    <div class="cmd d-flex align-items-stretch">
      <div class="cmdtools d-flex align-items-center">
        <svg width="5" height="18" fill="#aaa"><path d="M0 0h2v2H0zM3 0h2v2H3zM0 4h2v2H0zM3 4h2v2H3zM0 8h2v2H0zM3 8h2v2H3zM0 12h2v2H0zM3 12h2v2H3zM0 16h2v2H0zM3 16h2v2H3z"/></svg>
        <button aria-label="Close command line"><svg width="9" height="9" stroke="#ddd" stroke-width="2"><path d="M0 0l8 8M8 0L0 8"/></svg></button>
        <button class="ms-1" aria-label="Customize"><svg width="16" height="16"><path d="M3 1l3 3-2 2-3-2c-1 4 2 6 5 5l6 6 2-2-6-6c1-4-2-6-5-6z" fill="#c4c8d0" stroke="#333" stroke-width=".7"/></svg></button>
      </div>
      <div class="d-flex align-items-center flex-fill ps-1">
        <button class="d-flex align-items-center gap-1" aria-label="Recent commands"><svg width="15" height="14"><rect x=".5" y=".5" width="14" height="13" rx="1" fill="#a9b4c8" stroke="#667"/><path d="M3 4l4 3-4 3M8 10.500h4" fill="none" stroke="#223" stroke-width="1.300"/></svg><svg class="caret-s caret-grey"><use href="#c"/></svg></button>
        <input class="flex-fill" type="text" placeholder="Type a command" aria-label="Type a command">
        <button class="me-1" aria-label="Command history"><svg width="7" height="4" fill="#222"><path d="M0 4h7L3.500 0z"/></svg></button>
      </div>
    </div>
  </div>
</main>

<div class="lower d-flex flex-shrink-0 justify-content-between">
  <div class="ltabs d-flex">
    <button class="ltab lt-model fw-bold text-white"><svg width="57" height="17"><path d="M0 0h57c-4 2-3 17-9 17H8C2 17 4 2 0 0z" fill="url(#gtab3)"/></svg><span>Model</span></button>
    <button class="ltab lt-1"><svg width="65" height="17"><path d="M1 0h63c-4 2-3 16.500-9 16.500H10C4 16.500 5 2 1 0z" fill="#505050" stroke="#6a6a6a" stroke-width=".7"/></svg><span>Layout1</span></button>
    <button class="ltab lt-2"><svg width="66" height="17"><path d="M1 0h64c-4 2-3 16.500-9 16.500H10C4 16.500 5 2 1 0z" fill="#505050" stroke="#6a6a6a" stroke-width=".7"/></svg><span>Layout2</span></button>
    <button class="ltab lt-add" aria-label="New layout"><svg width="28" height="17"><path d="M8 1h19c0 9-3 14-8 14.500H3C6 11 5 4 8 1z" fill="#505050" stroke="#6a6a6a" stroke-width=".7"/><path d="M11 8h8M15 4v8" stroke="#ddd" stroke-width="2"/></svg></button>
  </div>
  <div class="status d-flex">
    <div class="sgrp d-flex"><button class="s-text">MODEL</button></div>
    <div class="sgrp d-flex"><button aria-label="Grid"><svg class="ic" viewBox="0 0 18 18" stroke="#2f9bff" stroke-width="1.300"><path d="M4 2v14M7 2v14M10 2v14M13 2v14"/><path d="M2 5h14M2 9h14M2 13h14" stroke-dasharray="2 1"/></svg></button><button aria-label="Snap"><svg class="ic" viewBox="0 0 18 18" stroke="#ccc" stroke-dasharray="1 2"><path d="M2 3.500h14M2 6.500h14M2 9.500h14M2 12.500h14M2 15.500h14"/></svg></button><button class="s-menu" aria-label="Snap menu"><svg class="caret-s"><use href="#c"/></svg></button></div>
    <div class="sgrp d-flex me-0"><button class="s-wide" aria-label="Ortho"><svg class="ic" viewBox="0 0 18 18" stroke="#bbb" fill="none"><path d="M3.500 4v11.500H16M3.500 11.500h4v4"/></svg></button><button class="s-tool" aria-label="Polar"><svg class="ic" viewBox="0 0 18 18" stroke="#2f9bff" stroke-width="1.500" fill="none"><circle cx="8" cy="10" r="6"/><path d="M8 10h9M8 10l6-6"/></svg></button><button class="s-menu" aria-label="Polar menu"><svg class="caret-s"><use href="#c"/></svg></button><button class="s-tool" aria-label="Isodraft"><svg class="ic" viewBox="0 0 18 18" stroke="#bbb" fill="none"><path d="M9 0v18M1 2l16 15"/></svg></button><button class="s-menu" aria-label="Isodraft menu"><svg class="caret-s"><use href="#c"/></svg></button></div>
    <div class="sgrp d-flex border-start-0"><button class="s-wide" aria-label="Object snap tracking"><svg class="ic" viewBox="0 0 18 18" stroke="#2f9bff" stroke-width="1.500" fill="none"><path d="M15 3L2 15.500h14"/><path d="M8 7l3 3"/></svg></button><button class="s-tool" aria-label="Object snap"><svg class="ic" viewBox="0 0 18 18" fill="none"><path d="M4 4h12v12H4z" stroke="#2f9bff" stroke-width="1.500"/><path d="M2 2h4v4H2z" fill="#0f0" stroke="#031"/></svg></button><button class="s-menu" aria-label="Object snap menu"><svg class="caret-s"><use href="#c"/></svg></button></div>
    <div class="sgrp d-flex"><button aria-label="Annotation visibility"><svg class="ic" viewBox="0 0 18 18" fill="#2f9bff"><use href="#man"/><circle cx="14" cy="4" r="2.500" fill="#4f4f4f" stroke="#2f9bff"/></svg></button><button aria-label="AutoScale"><svg class="ic" viewBox="0 0 18 18" fill="#c4c4c4"><use href="#man"/><path d="M14 1l-3 4h3l-2 4 5-5h-3l2-3z" stroke="#4f4f4f" stroke-width=".6"/></svg></button><button class="s-tool" aria-label="Annotation scale"><svg class="ic" viewBox="0 0 18 18" fill="#c4c4c4"><use href="#man"/></svg></button><button class="s-scale gap-1">1:1<svg class="caret-s"><use href="#c"/></svg></button></div>
    <div class="sgrp d-flex me-0"><button class="s-tool" aria-label="Workspace"><svg class="ic" viewBox="0 0 18 18"><circle cx="9" cy="9" r="4" fill="none" stroke="#ccc" stroke-width="3"/><path d="M9 3v12M3 9h12M5 5l8 8M13 5l-8 8" stroke="#ccc" stroke-width="2"/><circle cx="9" cy="9" r="2" fill="#4f4f4f"/></svg></button><button class="s-menu" aria-label="Workspace menu"><svg class="caret-s"><use href="#c"/></svg></button></div>
    <div class="sgrp d-flex border-start-0"><button aria-label="Annotation monitor"><svg class="ic" viewBox="0 0 18 18" stroke="#ccc" stroke-width="2"><path d="M9 2v14M2 9h14"/></svg></button></div>
    <div class="sgrp d-flex"><button class="s-wide" aria-label="Isolate objects"><svg class="ic" viewBox="0 0 18 18" stroke="#ccc" fill="none"><path d="M2.500 2.500h6v6h-6zM9 11l3.500 5.500h-7z"/><circle cx="13" cy="8" r="3"/></svg></button></div>
    <div class="sgrp d-flex"><button class="s-wide" aria-label="Hardware acceleration"><svg class="ic" viewBox="0 0 18 18"><circle cx="9" cy="9" r="8" fill="#0c58a0" stroke="#2f9bff"/><path d="M9 11l4-4" stroke="#8cc8ff" stroke-width="1.500"/></svg></button></div>
    <div class="sgrp d-flex me-0"><button aria-label="Clean screen"><svg class="ic" viewBox="0 0 18 18" fill="none" stroke="#ddd"><path d="M1.500 3.500h15v11h-15z"/><path d="M4 12l3-3M4 9v3h3M14 6l-3 3M14 9V6h-3" stroke-width="1.300"/></svg></button><button aria-label="Customization"><svg class="ic" viewBox="0 0 18 18" stroke="#ddd" stroke-width="2"><path d="M2 4h15M2 9h15M2 14h15"/></svg></button></div>
  </div>
</div>

<footer class="task d-flex flex-shrink-0">
  <button class="t48" aria-label="Start menu"><svg width="16" height="16" fill="#fff"><path d="M0 2.300L6.500 1.400v6.100H0zM7.300 1.300L16 0v7.500H7.300zM0 8.300h6.500v6.200L0 13.600zM7.300 8.300H16V16l-8.700-1.300z"/></svg></button>
  <div class="search d-flex align-items-center"><svg width="24" height="24" class="me-1"><circle cx="12" cy="12" r="9" fill="none" stroke="#fff" stroke-width="2.500"/></svg><input class="find flex-fill" type="text" placeholder="Type here to search" aria-label="Type here to search"><button class="me-3" aria-label="Voice"><svg width="11" height="16" fill="none" stroke="#aaa"><path d="M3 .5h5v10H3zM.5 9v4.500h10V9M5.500 13.500v2M3 15.500h5"/></svg></button></div>
  <button class="t48" aria-label="Task view"><svg width="20" height="14" fill="none" stroke="#fff"><path d="M4.500.5h11v13h-11zM2.500 2.500h-2v9h2M17.500 2.500h2v9h-2"/></svg></button>
  <button class="t48 ms-1 me-0" aria-label="File Explorer"><svg width="22" height="18"><path d="M0 1h8l2 2h12v15H0z" fill="#fbe08a"/><path d="M1 0h6v2H1z" fill="#f0b52c"/><path d="M4 18v-7h14v7h-4v-3H8v3z" fill="#38a9e4"/></svg></button>
  <button class="app app-chrome d-flex align-items-center"><svg width="24" height="24" class="me-1"><circle cx="12" cy="12" r="11" fill="#f5c518"/><path d="M12 12L2.500 6.500A11 11 0 0 1 21.500 6.500H12z" fill="#dc4437"/><path d="M2.500 6.500A11 11 0 0 0 11 23l4-8-3-3z" fill="#2ba24c"/><circle cx="12" cy="12" r="5" fill="#4a86f0" stroke="#fff" stroke-width="1.500"/></svg>UCS (Command) | ...</button>
  <button class="t48 ms-1" aria-label="Firefox"><svg width="23" height="23"><circle cx="12" cy="11" r="10.500" fill="#2f74c4"/><path d="M9 2c6-1 10 2 9 8l-5-3z" fill="#5fb4ea"/><path d="M3 3C0 8 0 12 1 15c3 7 10 8 14 7 7-2 9-9 7-15-1 6-3 10-8 10-3 0-5-1-6-4 2 1 4 1 5-1-3 0-4-1-3-4H7c-2-1-3-3-4-5z" fill="#e8711c"/><path d="M1 12c2 7 7 10 13 9-5-1-9-3-10-8z" fill="#f6a62c"/></svg></button>
  <button class="t48" aria-label="MATLAB"><svg width="24" height="22"><path d="M0 13l8-4 4 5-6 3z" fill="#4d8ec8"/><path d="M8 9c3-1 5-8 8-9l-4 14-5 3-1-3z" fill="#a8321c"/><path d="M16 0c3 3 5 12 8 18-4-3-7-1-11 4l-3-4c3-3 4-10 6-18z" fill="#e8782c"/></svg></button>
  <button class="app app-cad d-flex align-items-center"><svg width="24" height="24" class="me-1"><path d="M0 0h24v24H0z" fill="#f3e3df"/><use href="#alogo" x="4" y="3" width="17" height="18"/></svg>Autodesk AutoCAD...</button>
  <button class="t48" aria-label="Capture tool"><svg width="24" height="24"><circle cx="11" cy="11" r="10.500" fill="#5ab4e4"/><path d="M1 6c8-1 14 3 17 9l-6 6C9 14 5 10 1 10z" fill="#f4f8fb"/><path d="M15 12l8-2v9l-4 3-5-3z" fill="#14639c"/></svg></button>
  <button class="t48 ms-1" aria-label="Git"><svg width="24" height="24"><path d="M12 0l6 6-6 6-6-6z" fill="#e4645c"/><path d="M6 6l6 6-6 6-6-6z" fill="#6fa0f0"/><path d="M18 6l6 6-6 6-6-6z" fill="#5cae4c"/><path d="M12 12l6 6-6 6-6-6z" fill="#f4d860"/><path d="M10 5l3 4v9M13 10l4 3" stroke="#222" fill="none" stroke-width="1.500"/><circle cx="13" cy="17" r="2"/><circle cx="17" cy="13" r="2"/></svg></button>
  <button class="t48" aria-label="Tek"><svg width="23" height="23"><path d="M0 0h23v23H0z" fill="#fff"/><path d="M0 0h23v6H0z" fill="#2458b8"/><text x="11.500" y="6" font-size="8" font-weight="700" text-anchor="middle" font-family="Liberation Serif" fill="#fff">Tek</text><path d="M5 10h13v8H5z" fill="#111"/><path d="M6 16h3l1-4h4l1 3h3" stroke="#f0e020" fill="none"/><path d="M6 8.500h10M6 20.500h11" stroke="#111"/></svg></button>
  <div class="ms-auto d-flex align-items-center">
    <button class="me-2 pe-1" aria-label="Hidden icons"><svg width="12" height="7" fill="none" stroke="#fff" stroke-width="1.300"><path d="M0 6l6-5 6 5"/></svg></button>
    <button class="me-2" aria-label="Network"><svg width="16" height="14" fill="none" stroke="#fff"><path d="M3 2.500h12.500v8H5M.5.5h4v4h-4zM2.500 4.500v8h9M10 10.500v2"/></svg></button>
    <button aria-label="Volume"><svg width="17" height="14" fill="none" stroke="#fff"><path d="M.5 4.500h3l3-3v11l-3-3h-3zM8.500 5q1.500 2 0 4M11 3q3 4 0 8M13.500 1q4.500 6 0 12"/></svg></button>
    <div class="clock">11:48 AM<br>8/11/2017</div>
    <button class="bell" aria-label="Action center"><svg width="17" height="16" fill="none" stroke="#fff"><path d="M.5.5h15v11h-5l-2.500 3-2.500-3h-5z"/></svg></button>
    <div class="showdesk"></div>
  </div>
</footer>
<script src="https://cdn.jsdelivr.net/npm/bootstrap@5.3.0/dist/js/bootstrap.bundle.min.js"></script>
</body>
</html>
